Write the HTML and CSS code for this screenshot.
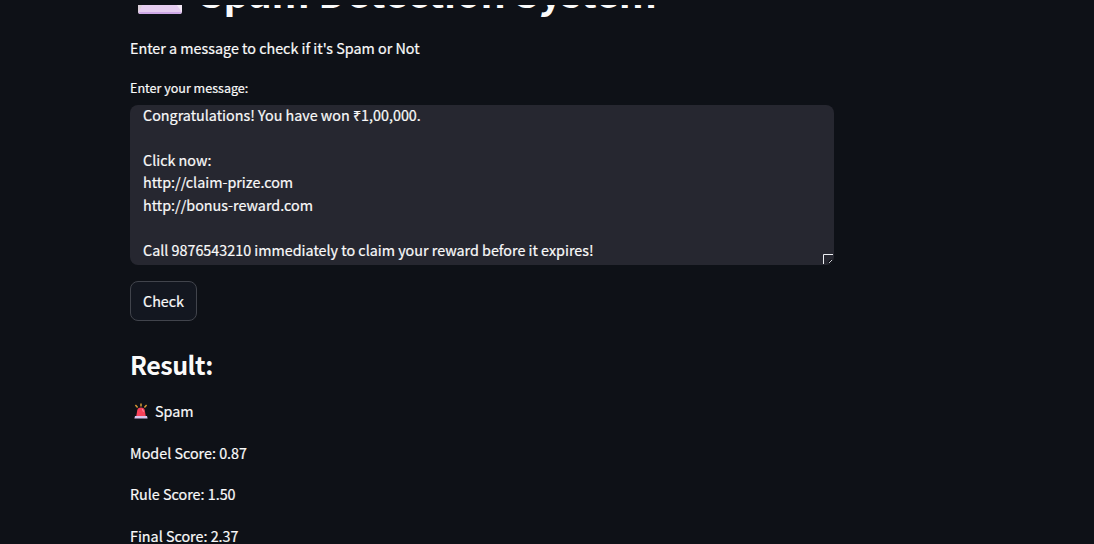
FILE: index.html
```html
<!DOCTYPE html>
<html lang="en">
<head>
<meta charset="utf-8">
<title>Spam Detection System</title>
<link rel="stylesheet" href="styles.css">
</head>
<body>
<div class="topbar"></div>
<main class="viewport">
  <div class="title-row">
    <h1 class="title"><svg class="title-icon" viewBox="0 0 46 40"><path d="M6 32V17a17 17 0 0 1 34 0v15z" fill="#f8314f"/><path d="M1 26h44v12q0 2-2 2H3q-2 0-2-2z" fill="#e5cdf0"/><path d="M1 26h7L1 39z" fill="#dbcfd9"/><path d="M36 26h9v12z" fill="#f3e8f6"/><path d="M2 38h42q0 2-2 2H4q-2 0-2-2z" fill="#cda8e6"/></svg><span class="title-text">Spam Detection System</span></h1>
  </div>
  <p class="text intro">Enter a message to check if it's Spam or Not</p>
  <label class="label">Enter your message:</label>
  <div class="textarea">
    <div class="message">Congratulations! You have won ₹1,00,000.

Click now:
http://claim-prize.com
http://bonus-reward.com

Call 9876543210 immediately to claim your reward before it expires!</div>
    <svg class="resizer" viewBox="0 0 11 11"><path d="M.5 10V.5H10" fill="none" stroke="#eceef2"/><path d="M6 9l3-3" fill="none" stroke="#0e1117" stroke-width="3"/><path d="M6 9l3-3" fill="none" stroke="#c8c9cd"/></svg>
  </div>
  <button class="button">Check</button>
  <h2 class="result">Result:</h2>
  <p class="text verdict"><svg class="siren" viewBox="0 0 14 16"><path d="M7 .4v3M1.4 2l2.2 2.4M12.6 2l-2.2 2.4" stroke="#d39a35" stroke-width="1.5" fill="none"/><path d="M2.2 13.4L3.2 7.4Q3.8 4.6 7 4.6t3.8 2.8l1 6z" fill="#f8415a"/><path d="M8 6.3q1.3.6 1.4 2.4" stroke="#ff9cae" fill="none"/><path d="M1 13h12l.6 2.6H.4z" fill="#d8c2ec"/></svg><span>Spam</span></p>
  <p class="text">Model Score: 0.87</p>
  <p class="text">Rule Score: 1.50</p>
  <p class="text">Final Score: 2.37</p>
</main>
</body>
</html>
```
FILE: styles.css
```css
* { box-sizing: border-box; }
body {
  margin: 0;
  height: 544px;
  overflow: hidden;
  background: #0e1117;
  color: #fafafa;
  font-family: "Noto Sans CJK SC", "Noto Sans", sans-serif;
  font-size: 14.34px;
  font-weight: 400;
  -webkit-text-stroke: 0.2px #fafafa;
}
.topbar { height: 5px; }
.viewport {
  height: 539px;
  overflow: hidden;
  padding-left: 130px;
  width: 834px;
}
.title-row {
  height: 15px;
  display: flex;
  align-items: flex-end;
}
.title {
  margin: 0;
  display: flex;
  align-items: flex-end;
  font-size: 39.6px;
  line-height: 53px;
  font-weight: 700;
  white-space: nowrap;
  -webkit-text-stroke: 0;
}
.title-icon {
  width: 46px;
  height: 40px;
  margin: 0 16px 6px 7px;
}
.title-text {
  padding-bottom: 3px;
  letter-spacing: -0.17px;
}
.text {
  margin: 0 0 16px;
  line-height: 25.6px;
  white-space: nowrap;
}
.intro { margin: 15px 0 0; }
.label {
  display: block;
  margin-top: 16px;
  height: 28.4px;
  font-size: 12.55px;
  line-height: 22px;
}
.textarea {
  position: relative;
  width: 704px;
  height: 160px;
  background: #262730;
  border-radius: 8px;
  overflow: hidden;
}
.message {
  margin-top: -1px;
  padding: 0 13px;
  line-height: 22.5px;
  white-space: pre;
}
.resizer {
  position: absolute;
  right: 0;
  bottom: 0;
  width: 11px;
  height: 11px;
}
.button {
  display: block;
  width: 67px;
  height: 40px;
  margin: 16px 0 0;
  padding: 0;
  border: 1px solid #41444c;
  border-radius: 8px;
  background: #131720;
  color: inherit;
  font: inherit;
  line-height: 38px;
}
.result {
  margin: 26px 0 17px;
  font-size: 25px;
  line-height: 34px;
  font-weight: 700;
  letter-spacing: -0.5px;
  -webkit-text-stroke: 0;
}
.verdict {
  display: flex;
  align-items: center;
}
.siren {
  width: 14px;
  height: 16px;
  margin: 0 7px 0 4px;
}
```
